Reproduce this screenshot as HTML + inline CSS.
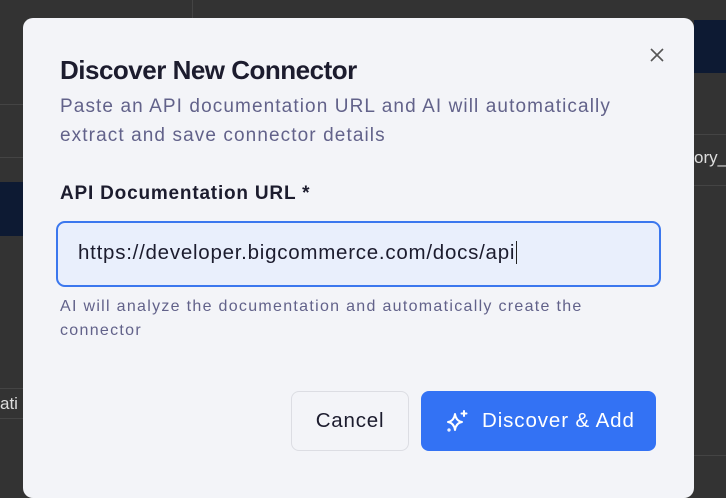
<!DOCTYPE html>
<html><head><style>
body{margin:0;width:726px;height:480px;overflow:hidden;background:#333;font-family:"Liberation Sans",sans-serif;position:relative}
.bg{position:absolute}
.modal{position:absolute;left:23px;top:18px;width:671px;height:480px;background:#f3f4f8;border-radius:10px}
.t{position:absolute;white-space:nowrap}
</style></head><body>
<div class="bg" style="left:192px;top:0;width:1px;height:18px;background:#444"></div>
<div class="bg" style="left:694px;top:20px;width:32px;height:53px;background:#0d1a33"></div>
<div class="bg" style="left:0;top:182px;width:23px;height:54px;background:#0d1a33"></div>
<div class="bg" style="left:0;top:104px;width:23px;height:1px;background:#444"></div>
<div class="bg" style="left:0;top:157px;width:23px;height:1px;background:#444"></div>
<div class="bg" style="left:694px;top:134px;width:32px;height:1px;background:#444"></div>
<div class="bg" style="left:694px;top:185px;width:32px;height:1px;background:#444"></div>
<div class="bg" style="left:0;top:388px;width:23px;height:1px;background:#444"></div>
<div class="bg" style="left:0;top:418px;width:23px;height:1px;background:#444"></div>
<div class="bg" style="left:694px;top:455px;width:32px;height:1px;background:#444"></div>
<div class="t" style="left:694px;top:148px;color:#ddd;font-size:17px">ory_</div>
<div class="t" style="left:0;top:394px;color:#ddd;font-size:17px">ati</div>
<div class="modal">
<div class="t" style="left:37px;top:37px;font-size:26px;font-weight:bold;color:#1c1c2e;letter-spacing:-0.5px">Discover New Connector</div>
<svg style="position:absolute;left:626px;top:29px" width="16" height="16" viewBox="0 0 16 16"><path d="M2 2L14 14M14 2L2 14" stroke="#555" stroke-width="1.6"/></svg>
<div class="t" style="left:37px;top:74px;font-size:19px;letter-spacing:1.1px;line-height:29px;color:#62628a">Paste an API documentation URL and AI will automatically<br>extract and save connector details</div>
<div class="t" style="left:37px;top:165px;font-size:19px;letter-spacing:0.8px;font-weight:bold;color:#1c1c2e">API Documentation URL *</div>
<div style="position:absolute;left:33px;top:203px;width:601px;height:62px;border:2px solid #3b77ee;border-radius:9px;background:#e9effc;box-sizing:content-box"></div>
<div class="t" style="left:55px;top:223px;font-size:20.5px;letter-spacing:0.75px;color:#1c1c2e">https://developer.bigcommerce.com/docs/api<span style="border-left:1.5px solid #222;margin-left:1px"></span></div>
<div class="t" style="left:37px;top:277px;font-size:16px;letter-spacing:1.3px;line-height:24px;color:#62628a">AI will analyze the documentation and automatically create the<br>connector</div>
<div style="position:absolute;left:268px;top:373px;width:116px;height:58px;border:1px solid #dcdde3;border-radius:8px;background:#f3f4f8;font-size:20.5px;letter-spacing:0.8px;color:#1c1c2e;text-align:center;line-height:58px">Cancel</div>
<div style="position:absolute;left:398px;top:373px;width:235px;height:60px;border-radius:8px;background:#3372f4;color:#fff;font-size:20.5px;letter-spacing:0.9px;line-height:60px">
<svg style="position:absolute;left:24px;top:18px" width="24" height="24" viewBox="0 0 24 24" fill="none" stroke="#fff" stroke-width="2" stroke-linejoin="round" stroke-linecap="round"><path d="M10 5 Q11 12 17 13 Q11 14 10 21 Q9 14 3 13 Q9 12 10 5 Z"/><path d="M19 2v5M16.5 4.5h5"/><circle cx="4" cy="21" r="0.6"/></svg>
<span style="position:absolute;left:61px">Discover &amp; Add</span></div>
</div>
</body></html>
